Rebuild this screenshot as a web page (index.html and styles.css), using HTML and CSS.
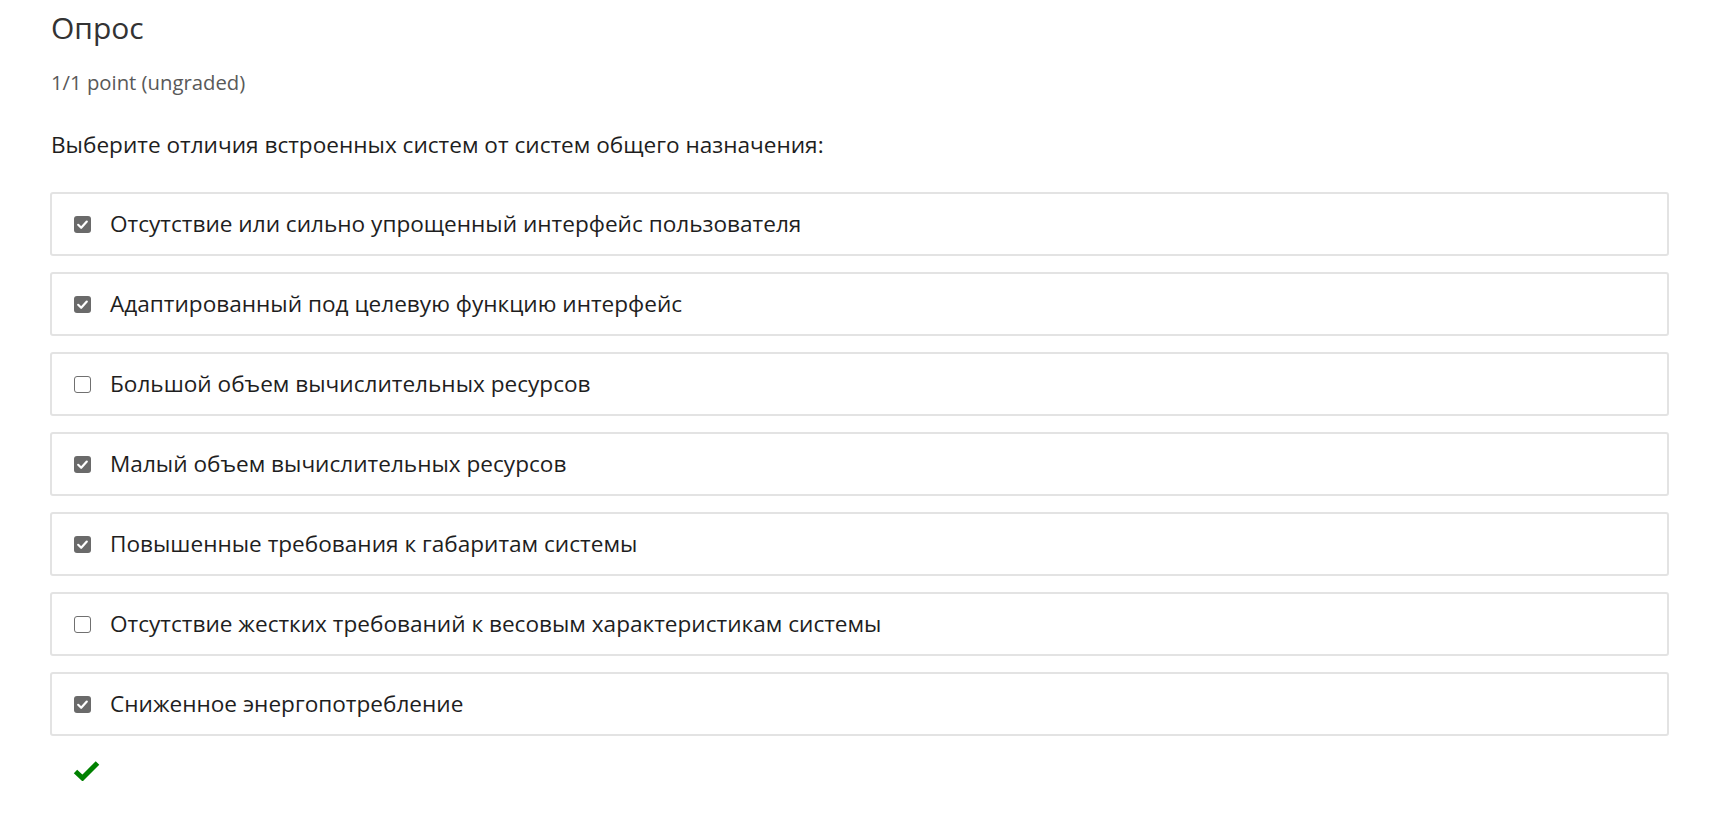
FILE: index.html
```html
<!DOCTYPE html>
<html lang="ru">
<head>
<meta charset="utf-8">
<link rel="stylesheet" href="styles.css">
</head>
<body>
<div class="problem">
  <h3 class="title">Опрос</h3>
  <div class="points">1/1 point (ungraded)</div>
  <p class="question">Выберите отличия встроенных систем от систем общего назначения:</p>
  <div class="choices">
    <label class="choice"><span class="cb checked"><svg viewBox="0 0 17 17" width="17" height="17"><rect x="0" y="0" width="17" height="17" rx="3" fill="#6a6a6a"/><path d="M4.2 8.8 L7.2 11.8 L12.8 5.6" fill="none" stroke="#fff" stroke-width="2.2" stroke-linecap="round" stroke-linejoin="round"/></svg></span><span class="txt">Отсутствие или сильно упрощенный интерфейс пользователя</span></label>
    <label class="choice"><span class="cb checked"><svg viewBox="0 0 17 17" width="17" height="17"><rect x="0" y="0" width="17" height="17" rx="3" fill="#6a6a6a"/><path d="M4.2 8.8 L7.2 11.8 L12.8 5.6" fill="none" stroke="#fff" stroke-width="2.2" stroke-linecap="round" stroke-linejoin="round"/></svg></span><span class="txt">Адаптированный под целевую функцию интерфейс</span></label>
    <label class="choice"><span class="cb empty"></span><span class="txt">Большой объем вычислительных ресурсов</span></label>
    <label class="choice"><span class="cb checked"><svg viewBox="0 0 17 17" width="17" height="17"><rect x="0" y="0" width="17" height="17" rx="3" fill="#6a6a6a"/><path d="M4.2 8.8 L7.2 11.8 L12.8 5.6" fill="none" stroke="#fff" stroke-width="2.2" stroke-linecap="round" stroke-linejoin="round"/></svg></span><span class="txt">Малый объем вычислительных ресурсов</span></label>
    <label class="choice"><span class="cb checked"><svg viewBox="0 0 17 17" width="17" height="17"><rect x="0" y="0" width="17" height="17" rx="3" fill="#6a6a6a"/><path d="M4.2 8.8 L7.2 11.8 L12.8 5.6" fill="none" stroke="#fff" stroke-width="2.2" stroke-linecap="round" stroke-linejoin="round"/></svg></span><span class="txt">Повышенные требования к габаритам системы</span></label>
    <label class="choice"><span class="cb empty"></span><span class="txt">Отсутствие жестких требований к весовым характеристикам системы</span></label>
    <label class="choice"><span class="cb checked"><svg viewBox="0 0 17 17" width="17" height="17"><rect x="0" y="0" width="17" height="17" rx="3" fill="#6a6a6a"/><path d="M4.2 8.8 L7.2 11.8 L12.8 5.6" fill="none" stroke="#fff" stroke-width="2.2" stroke-linecap="round" stroke-linejoin="round"/></svg></span><span class="txt">Сниженное энергопотребление</span></label>
  </div>
  <div class="status"><svg viewBox="0 0 27 21" width="27" height="21"><path d="M2.5 11.5 L9.5 18 L24.5 3" fill="none" stroke="#008100" stroke-width="5" stroke-linejoin="miter"/></svg></div>
</div>
</body>
</html>
```

FILE: styles.css
```css
* { box-sizing: border-box; }
html, body { margin: 0; padding: 0; background: #fff; }
body {
  font-family: "Open Sans", "Noto Sans", sans-serif;
  color: #1e1e1e;
}
.problem {
  padding: 0 43px 0 50px;
}
.title {
  margin: 0;
  padding-top: 7px;
  padding-left: 1px;
  font-size: 30px;
  font-weight: 400;
  line-height: 42px;
  color: #333;
}
.points {
  margin-top: 19px;
  padding-left: 1px;
  font-size: 20.3px;
  line-height: 28px;
  color: #595959;
}
.question {
  margin: 33px 0 0 0;
  padding-left: 1px;
  font-size: 22.6px;
  line-height: 32px;
  color: #1e1e1e;
}
.choices {
  margin-top: 31px;
  display: flex;
  flex-direction: column;
  gap: 16px;
}
.choice {
  display: flex;
  align-items: center;
  height: 64px;
  border: 2px solid #e3e3e3;
  border-radius: 3px;
  padding-left: 22px;
}
.cb {
  width: 17px;
  height: 17px;
  flex: none;
  display: block;
}
.cb svg { display: block; }
.cb.empty {
  border: 1.5px solid #707070;
  border-radius: 3px;
  background: #fff;
}
.txt {
  margin-left: 19px;
  font-size: 22.6px;
  line-height: 32px;
  color: #1e1e1e;
}
.status {
  padding: 24px 0 0 23px;
}
.status svg { display: block; }
```
